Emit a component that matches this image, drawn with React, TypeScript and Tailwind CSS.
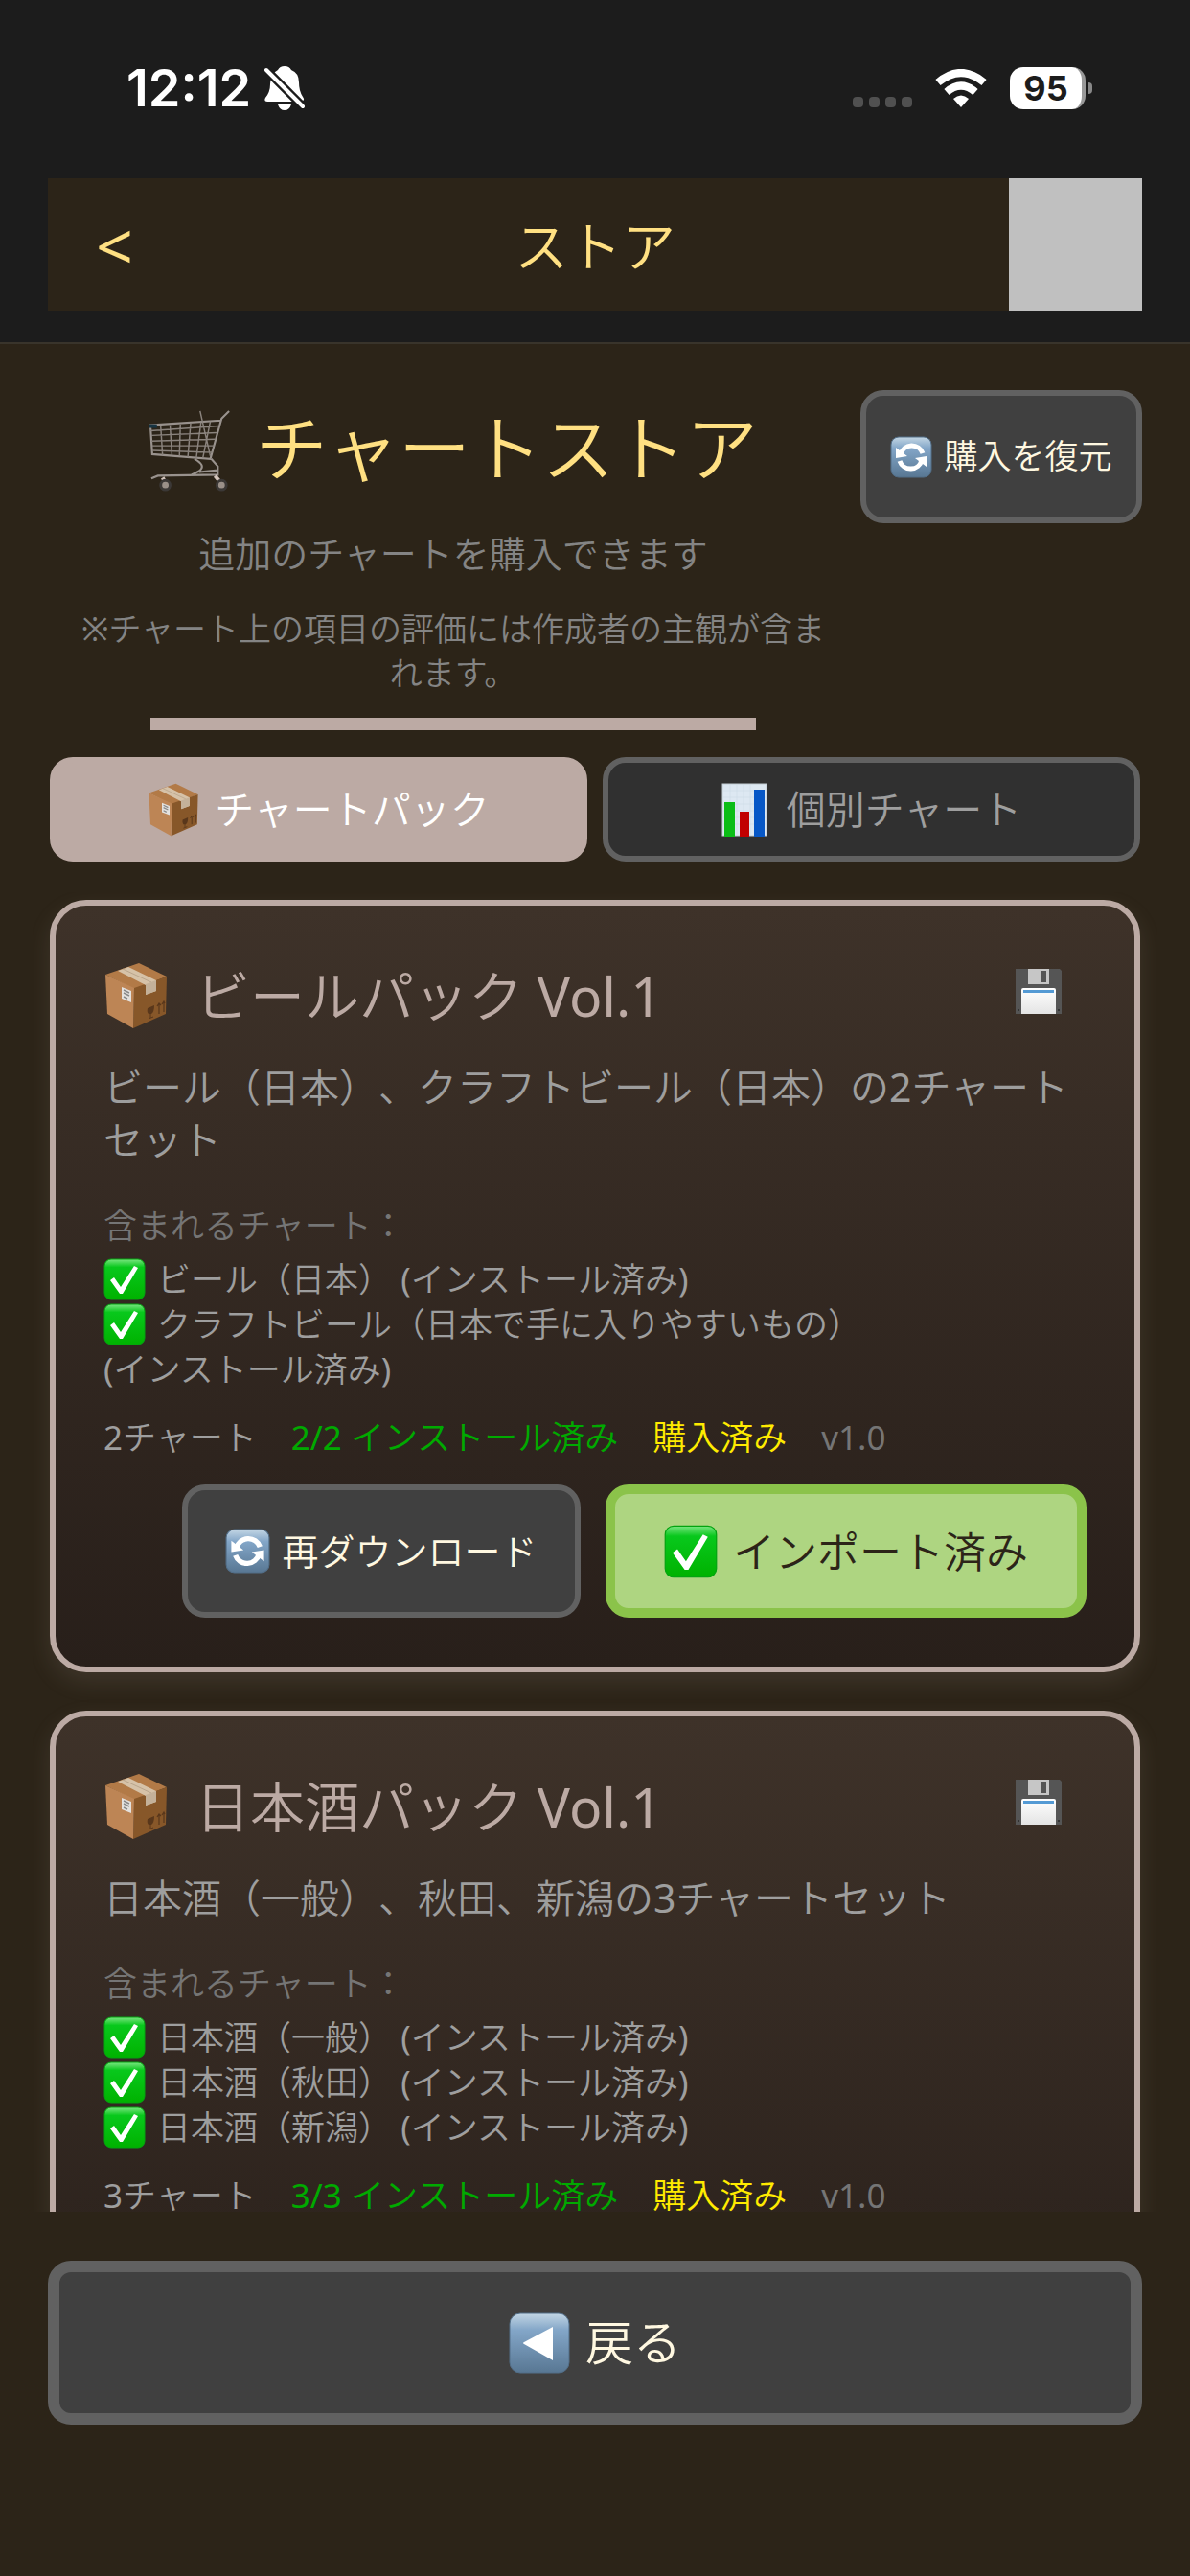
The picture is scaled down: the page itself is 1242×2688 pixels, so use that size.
import { type ReactNode } from "react";

const packs = [
    {
        title: "ビールパック Vol.1",
        description: "ビール（日本）、クラフトビール（日本）の2チャートセット",
        charts: ["ビール（日本）", "クラフトビール（日本で手に入りやすいもの）"],
    },
    {
        title: "日本酒パック Vol.1",
        description: "日本酒（一般）、秋田、新潟の3チャートセット",
        charts: ["日本酒（一般）", "日本酒（秋田）", "日本酒（新潟）"],
    },
];

function Gradients() {
    return (
        <svg className="absolute h-0 w-0" aria-hidden="true">
            <defs>
                <linearGradient id="green" x1="0" y1="0" x2="0" y2="1">
                    <stop offset="0" stopColor="#7ae681" />
                    <stop offset="0.2" stopColor="#08c81c" />
                    <stop offset="1" stopColor="#00b200" />
                </linearGradient>
                <linearGradient id="blue" x1="0" y1="0" x2="0" y2="1">
                    <stop offset="0" stopColor="#c3d6e4" />
                    <stop offset="0.28" stopColor="#83a6c8" />
                    <stop offset="1" stopColor="#587793" />
                </linearGradient>
                <linearGradient id="label" x1="0" y1="0" x2="0" y2="1">
                    <stop offset="0" stopColor="#ffffff" />
                    <stop offset="1" stopColor="#e4e4e4" />
                </linearGradient>
            </defs>
        </svg>
    );
}

function BoxIcon({ className }: { className: string }) {
    return (
        <svg viewBox="0 0 66 70" className={className} aria-hidden="true">
            <path d="M1 13 36 1 65 15 31 28Z" fill="#b27a47" />
            <path d="M31 27 65 15 64 54 30 69Z" fill="#875729" />
            <path d="M1 13 31 27 30 69 3 54Z" fill="#bd8555" />
            <path d="M14 9 25 5 54 19V30L43 34V24Z" fill="#d6c2a8" />
            <path d="M19 7 49 21" stroke="#b9a58c" />
            <path d="M43 23 54 19V30L43 34Z" fill="#c4b199" />
            <path d="M18 26 28 30V42L18 38Z" fill="#e4e2df" />
            <path d="M20 29 26 32M20 32 26 35M20 36 24 38" stroke="#888" strokeWidth="1.5" />
            <path d="M45 48 52 45Q52 52 49 54L46 54Q44 52 45 48Z" fill="#59371b" />
            <path d="M48 53V58M46 59 51 57" stroke="#59371b" />
            <path d="M57 44V54M62 42V52M55 46 57 43 59 45M60 44 62 41 63 43" fill="none" stroke="#59371b" strokeWidth="1.2" />
        </svg>
    );
}

function CheckIcon({ className }: { className: string }) {
    return (
        <svg viewBox="0 0 44 44" className={className} aria-hidden="true">
            <rect x="1" y="1" width="42" height="42" rx="7" fill="url(#green)" stroke="#04a411" />
            <path d="M7 23 11 20 18 30 32 8 36 10 20 37H17Z" fill="#fff" />
        </svg>
    );
}

function RefreshIcon({ className }: { className: string }) {
    return (
        <svg viewBox="0 0 44 44" className={className} aria-hidden="true">
            <rect x="1" y="1" width="42" height="42" rx="8" fill="url(#blue)" stroke="#526e88" />
            <path d="M11 19A12 12 0 0 1 34 18M33 25A12 12 0 0 1 10 26" fill="none" stroke="#fff" strokeWidth="5" />
            <path d="M6 12 6 23 18 21ZM38 32 38 21 26 23Z" fill="#fff" />
        </svg>
    );
}

function CartIcon({ className }: { className: string }) {
    return (
        <svg viewBox="0 0 90 90" className={className} fill="none" stroke="#99928d" strokeWidth="1.5" aria-hidden="true">
            <path d="M86 2 78 10 66 53 4 48 2 17 77 12" strokeWidth="2.2" />
            <path d="M2 23 75 18M3 28 73 25M3 34 71 32M4 39 70 39M4 44 68 46M13 18 15 49M23 17 25 49M34 16 33 50M45 15 42 51M56 14 51 52M66 13 58 52M55 2 66 50" stroke="#8a837d" />
            <path d="M49 53Q62 60 54 66L46 70M67 53 74 61V70L10 71 3 74M74 65 54 67" strokeWidth="2.2" />
            <path d="M15 73 18 78M71 71 76 77" stroke="#d3c4bb" strokeWidth="4" />
            <circle cx="18" cy="81" r="5" stroke="#3b3836" strokeWidth="3" fill="#9a9089" />
            <circle cx="78" cy="81" r="5" stroke="#3b3836" strokeWidth="3" fill="#9a9089" />
            <path d="M1 18H9" stroke="#173442" strokeWidth="4" />
        </svg>
    );
}

function ChartIcon({ className }: { className: string }) {
    return (
        <svg viewBox="0 0 48 56" className={className} aria-hidden="true">
            <rect x="1" y="1" width="46" height="54" fill="#dde8f2" stroke="#c2cbd2" />
            <path d="M2 8H46M2 15H46M2 22H46M2 29H46M2 36H46M2 43H46M9 2V54M16 2V54M23 2V54M30 2V54" stroke="#cfdce8" strokeWidth="0.7" />
            <rect x="3" y="20" width="11" height="36" fill="#0bbd16" />
            <rect x="19" y="30" width="10" height="26" fill="#c10000" />
            <rect x="34" y="7" width="11" height="49" fill="#0757c6" />
        </svg>
    );
}

function DiskIcon({ className }: { className: string }) {
    return (
        <svg viewBox="0 0 48 48" className={className} aria-hidden="true">
            <path d="M0 0H46L48 2V47H0Z" fill="#555" />
            <path d="M13 0H35V16H13Z" fill="#c6c6c6" />
            <path d="M26 2H32V14H26Z" fill="#555" />
            <path d="M6 47V22Q6 20 8 20H40Q42 20 42 22V47Z" fill="url(#label)" />
            <path d="M8 22H40V25H8Z" fill="#549ad4" />
            <path d="M2 43H4M44 43H46" stroke="#333" strokeWidth="2" />
        </svg>
    );
}

function StatusBar() {
    return (
        <div className="flex h-[186px] items-start justify-between pt-[68px] pr-[102px] pl-[132px] text-white">
            <div className="flex h-12 items-center gap-[14px]">
                <span className="font-['Inter',sans-serif] text-[54px] leading-none font-semibold">12:12</span>
                <svg viewBox="0 0 42 46" className="h-[46px] w-[42px]" fill="#fff" aria-hidden="true">
                    <path d="M21 0Q26 0 28 4Q36 7 36 17Q36 26 40 32Q43 36 38 37H3Q-1 37 1 33Q6 27 6 19Q6 8 14 4Q16 0 21 0ZM14 40H28Q26 46 21 46Q16 46 14 40Z" />
                    <path d="M0 2 42 44" stroke="#1c1c1c" strokeWidth="9" />
                    <path d="M2 4 40 42" stroke="#fff" strokeWidth="4" strokeLinecap="round" />
                </svg>
            </div>
            <div className="flex h-12 items-center">
                <div className="mt-7 mr-6 flex gap-[6px]">
                    {[0, 1, 2, 3].map((dot) => (
                        <span key={dot} className="h-[11px] w-[11px] rounded-[4px] bg-[#505050]" />
                    ))}
                </div>
                <svg viewBox="0 0 54 40" className="mr-6 h-10 w-[54px]" fill="none" stroke="#fff" strokeWidth="8" aria-hidden="true">
                    <path d="M3 14Q27-6 51 14M12 24Q27 11 42 24" />
                    <path d="M19 31Q27 24 35 31L27 40Z" fill="#fff" stroke="none" />
                </svg>
                <span className="flex h-11 w-[79px] items-center justify-center rounded-[14px] border-r-4 border-[#999] bg-white font-['Inter',sans-serif] text-4xl font-bold text-[#1c1c1c]">
                    95
                </span>
                <span className="ml-[3px] h-3 w-1 rounded-r-full bg-[#888]" />
            </div>
        </div>
    );
}

function Button({ className, children }: { className: string; children: ReactNode }) {
    return (
        <button type="button" className={`flex items-center justify-center rounded-[24px] ${className}`}>
            {children}
        </button>
    );
}

export default function App() {
    return (
        <div className="flex h-screen w-full flex-col overflow-hidden bg-[#2c2418] font-['Noto_Sans','Noto_Sans_CJK_JP_DemiLight','Noto_Sans_CJK_JP',sans-serif] font-normal [text-spacing-trim:space-all]">
            <Gradients />
            <header className="shrink-0 border-b-2 border-[#39342b] bg-[#1c1c1c] pb-8">
                <StatusBar />
                <div className="mx-[50px] flex h-[139px] bg-[#2c2418] text-[#ffe082]">
                    <button type="button" className="w-[139px] text-[68px] leading-none" aria-label="戻る">&lt;</button>
                    <h1 className="flex flex-1 items-center justify-center text-[56px]">ストア</h1>
                    <div className="w-[139px] bg-[#c0c0c0]" />
                </div>
            </header>

            <main className="flex min-h-0 flex-1 flex-col px-[50px] pt-[48px]">
                <section className="flex items-start justify-between">
                    <div className="flex w-[846px] flex-col items-center text-center text-[#848484]">
                        <h2 className="flex h-[120px] items-center gap-6 text-[75px] text-[#ffe082]">
                            <CartIcon className="mt-2 h-[88px] w-[88px]" />
                            チャートストア
                        </h2>
                        <p className="mt-[22px] text-[38px] leading-[56px]">追加のチャートを購入できます</p>
                        <p className="mt-7 px-6 text-[34px] leading-[46px]">※チャート上の項目の評価には作成者の主観が含まれます。</p>
                        <div className="mt-6 h-[13px] w-[632px] bg-[#bcaaa4]" />
                    </div>
                    <Button className="h-[139px] w-[294px] gap-3 border-6 border-[#616161] bg-[#404040] text-[35px] text-[#fff8e1]">
                        <RefreshIcon className="h-11 w-11" />
                        購入を復元
                    </Button>
                </section>

                <nav className="mt-7 flex gap-4 px-[2px]">
                    <Button className="h-[109px] flex-1 gap-4 border-6 border-[#bcaaa4] bg-[#bcaaa4] text-[41px] text-white">
                        <BoxIcon className="h-[56px] w-[54px]" />
                        チャートパック
                    </Button>
                    <Button className="h-[109px] flex-1 gap-5 border-6 border-[#616161] bg-[#303030] text-[41px] text-[#9e9e9e]">
                        <ChartIcon className="h-[56px] w-[48px]" />
                        個別チャート
                    </Button>
                </nav>

                <div className="-mx-4 mt-[32px] min-h-0 flex-1 overflow-y-auto px-[18px] pt-2 [scrollbar-width:none]">
                    {packs.map((pack) => (
                        <article
                            key={pack.title}
                            className="mb-[40px] rounded-[38px] border-6 border-[#bcaaa4] bg-linear-to-b from-[#3e3229] to-[#281f1a] px-[50px] pt-[54px] pb-[51px] text-[35px] text-[#9e9e9e] shadow-[0_10px_24px_#bcaaa422]"
                        >
                            <div className="flex h-[80px] items-center">
                                <BoxIcon className="mr-7 h-[70px] w-[68px]" />
                                <h3 className="flex-1 text-[57px] leading-[76px] text-[#bcaaa4]">{pack.title}</h3>
                                <DiskIcon className="mr-[26px] mb-2 h-12 w-12" />
                            </div>
                            <p className="mt-7 text-[41px] leading-[55px]">{pack.description}</p>
                            <p className="mt-[38px] leading-[48px] text-[#757575]">含まれるチャート：</p>
                            <ul className="mt-2 leading-[47px]">
                                {pack.charts.map((chart) => (
                                    <li key={chart}>
                                        <CheckIcon className="mr-3 inline h-[44px] w-[44px] align-[-9px]" />
                                        {chart} <span className="inline-block">(インストール済み)</span>
                                    </li>
                                ))}
                            </ul>
                            <div className="mt-6 flex gap-9 leading-[48px]">
                                <span>{pack.charts.length}チャート</span>
                                <span className="text-[#00aa00]">
                                    {pack.charts.length}/{pack.charts.length} インストール済み
                                </span>
                                <span className="text-[#ffeb00]">購入済み</span>
                                <span className="text-[#757575]">v1.0</span>
                            </div>
                            <div className="mt-[25px] flex justify-end gap-[26px]">
                                <Button className="h-[139px] w-[416px] gap-3 border-6 border-[#616161] bg-[#404040] text-[38px] text-[#fff8e1]">
                                    <RefreshIcon className="h-[47px] w-[47px]" />
                                    再ダウンロード
                                </Button>
                                <Button className="h-[139px] w-[502px] gap-4 border-10 border-[#8bc34a] bg-[#aed581] text-[44px] text-[#2c2418]">
                                    <CheckIcon className="h-14 w-14" />
                                    インポート済み
                                </Button>
                            </div>
                        </article>
                    ))}
                </div>
            </main>

            <footer className="shrink-0 px-[50px] pt-[51px] pb-[158px]">
                <Button className="h-[171px] w-full gap-4 border-12 border-[#616161] bg-[#404040] text-[50px] text-[#fff8e1]">
                    <svg viewBox="0 0 64 64" className="h-16 w-16" aria-hidden="true">
                        <rect x="1" y="1" width="62" height="62" rx="11" fill="url(#blue)" stroke="#526e88" />
                        <path d="M46 15V50L16 33Q14 32 16 31Z" fill="#fff" />
                    </svg>
                    戻る
                </Button>
            </footer>
        </div>
    );
}
